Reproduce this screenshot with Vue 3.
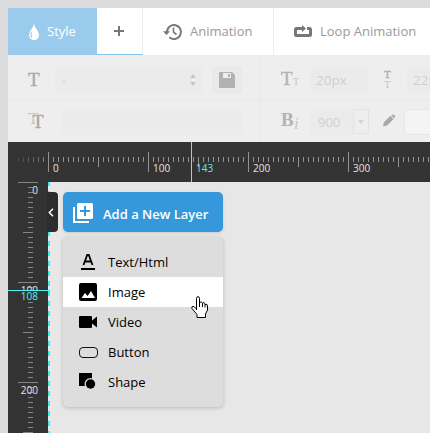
<script setup>
const hTicks = Array.from({ length: 84 }, (_, i) => i - 7)
const vTicks = Array.from({ length: 51 }, (_, i) => i)
const hLen = (i) => (i % 20 === 0 ? [152, 172] : i % 10 === 0 && i > 0 ? [157, 167] : [157, 162])
const vLen = (i) => (i % 20 === 0 ? [18, 38] : i % 10 === 0 ? [23, 33] : [28, 33])
const hLabels = [0, 100, 200, 300]
const vLabels = [0, 100, 200]
</script>

<template>
  <div class="page">
    <nav class="tabs">
      <div class="tab style">
        <svg class="drop" width="12" height="18" viewBox="0 0 12 18"><path d="M6 .5C5.5 5 1 8 1 12.2a5 5 0 0 0 10 0C11 8 6.500 5 6 .5z" fill="#fff"/><path d="M4 8.500C2.500 11 2.300 13 4 14.500" fill="none" stroke="#9acbed" stroke-width="1.100"/></svg>
        <span>Style</span>
      </div>
      <div class="tab plus"><svg width="10" height="10"><path d="M5 0V10M0 5H10" stroke="#777" stroke-width="2"/></svg></div>
      <div class="tab anim">
        <svg width="20" height="18" viewBox="0 0 20 18"><path d="M4 9a7 7 0 1 1 2.300 5.200" fill="none" stroke="#777" stroke-width="2"/><path d="M0 8.200H7L3.500 12z" fill="#777"/><path d="M10.500 4.500V9.200L13.500 11.500" fill="none" stroke="#777" stroke-width="1.600"/></svg>
        <span>Animation</span>
      </div>
      <div class="tab loop">
        <svg width="18" height="13" viewBox="0 0 18 13"><path d="M6 3.500H2.500Q1.500 3.500 1.500 4.500V9.500Q1.500 10.500 2.500 10.500H15.500Q16.500 10.500 16.500 9.500V4.500Q16.500 3.500 15.500 3.500H13" fill="none" stroke="#777" stroke-width="3"/><path d="M5 2H8V0L12 3.500L8 7V5H5z" fill="#777"/></svg>
        <span>Loop Animation</span>
      </div>
    </nav>

    <section class="tools">
      <div class="row">
        <div class="left">
          <b class="glyph t1">T</b>
          <div class="field select"><span>-</span><svg width="6" height="14"><path d="M3 1L5.800 5H.2zM3 13L5.800 9H.2z" fill="#c5c5c5"/></svg></div>
          <div class="save"><svg width="16" height="16"><path d="M0 1Q0 0 1 0H13L16 3V15Q16 16 15 16H1Q0 16 0 15z" fill="#b1b1b1"/><path d="M4 1H12V6H4z" fill="#eee"/><path d="M9 2H11V5H9z" fill="#b1b1b1"/></svg></div>
        </div>
        <div class="right">
          <svg class="ico" width="20" height="20"><text x="0" y="15" font-size="19" fill="#b3b3b3" stroke="#b3b3b3" stroke-width=".4">T</text><text x="12" y="15" font-size="10" fill="#c6c6c6">T</text></svg>
          <div class="field num">20px</div>
          <svg class="ico2" width="10" height="22"><text x="1" y="9" font-size="11" fill="#aaa" stroke="#aaa" stroke-width=".3">T</text><text x="1" y="19" font-size="11" fill="#c6c6c6">T</text></svg>
          <div class="field num second">22px</div>
        </div>
      </div>
      <div class="row lower">
        <div class="left">
          <svg class="shadowt" width="18" height="20"><text x="0" y="12" font-size="17" fill="#c4c4c4">T</text><text x="4.500" y="15.500" font-size="18" fill="#aaa" stroke="#eee" stroke-width="2" paint-order="stroke">T</text><text x="4.500" y="15.500" font-size="18" fill="#aaa" stroke="#aaa" stroke-width=".3">T</text></svg>
          <div class="field wide"></div>
        </div>
        <div class="right">
          <svg class="ico" width="20" height="20"><text x="0" y="14" font-size="19" font-weight="bold" fill="#b3b3b3">B</text><text x="13" y="17" font-size="17" font-style="italic" fill="#c6c6c6">i</text></svg>
          <div class="field num weight">900</div>
          <div class="drop-btn"><svg width="6" height="4"><path d="M0 0H6L3 4z" fill="#d5d5d5"/></svg></div>
          <svg class="pencil" width="13" height="13" viewBox="0 0 14 14"><path d="M1 9L8 2L11.500 5.500L4.500 12.500L0 13.500z" fill="#a8a8a8"/><path d="M9 1.500L10.500 .5Q11 .2 11.500.5L13 2.500Q13.500 3 13 3.500L12 4.500z" fill="#a8a8a8"/></svg>
          <div class="input"></div>
        </div>
      </div>
    </section>

    <div class="workspace">
      <svg class="ruler" width="422" height="291" viewBox="8 142 422 291">
        <defs><linearGradient id="fade" gradientUnits="userSpaceOnUse" x1="10" x2="48" y1="0" y2="0"><stop stop-color="#333"/><stop offset="1" stop-color="#888"/></linearGradient></defs>
        <path d="M8 142H430V182H48V433H8z" fill="#333"/>
        <rect v-for="i in hTicks" :key="'h' + i" :x="48 + i * 5" :y="hLen(i)[0]" width="1" :height="hLen(i)[1] - hLen(i)[0]" :fill="i < 0 ? 'url(#fade)' : '#929292'"/>
        <rect v-for="i in vTicks" :key="'v' + i" :x="vLen(i)[0]" :y="182 + i * 5" :width="vLen(i)[1] - vLen(i)[0]" height="1" fill="#858585"/>
        <text v-for="n in hLabels" :key="'a' + n" :x="53 + n" y="172" class="mark">{{ n }}</text>
        <text v-for="n in vLabels" :key="'b' + n" x="38" :y="194 + n" text-anchor="end" class="mark">{{ n }}</text>
        <path d="M8 291H48V301H8z" fill="#333"/>
        <path d="M28 302.500H33" stroke="#858585"/>
        <path d="M191.500 142V182M8 290.500H50" stroke="#4ef2f5"/>
        <text x="196" y="172" class="mark cyan">143</text>
        <text x="38" y="300" text-anchor="end" class="mark cyan">108</text>
        <path d="M49 182V433" stroke="#28f6fa" stroke-width="2" stroke-dasharray="5 5" stroke-dashoffset="1"/>
      </svg>

      <div class="collapse"><svg width="6" height="9"><path d="M5 .7L1.300 4.500L5 8.300" fill="none" stroke="#fff" stroke-width="1.500"/></svg></div>
      <div class="panel">
        <button class="add">
          <svg width="20" height="20"><path d="M1 4V19H16" fill="none" stroke="#fff" stroke-width="2"/><rect x="4" y="0" width="16" height="16" rx="1.500" fill="#fff"/><path d="M12 3V13M7 8H17" stroke="#3498db" stroke-width="2"/></svg>
          <span>Add a New Layer</span>
        </button>
        <ul class="menu">
          <li><svg width="18" height="18"><path d="M2 15H16V17H2z"/><path d="M4.500 12L8.200 2H9.800L13.500 12M6 8.500H12" fill="none" stroke="#000" stroke-width="1.800"/></svg>Text/Html</li>
          <li class="active"><svg width="18" height="18"><rect width="18" height="18" rx="2"/><path d="M2.500 15L6 10L8.500 13L12 8L16 15z" fill="#fff"/></svg>Image</li>
          <li><svg width="18" height="18"><path d="M1 3H12Q13 3 13 4V7.500L18 3.500V14.500L13 10.500V14Q13 15 12 15H1Q0 15 0 14V4Q0 3 1 3z"/></svg>Video</li>
          <li><svg width="19" height="18"><rect x=".5" y="4.500" width="18" height="10" rx="3.500" fill="none" stroke="#111"/></svg>Button</li>
          <li><svg width="18" height="18"><path d="M0 0H13V13H0z"/><circle cx="11.500" cy="11" r="6" fill="#ddd"/><circle cx="11.500" cy="11" r="4.700"/></svg>Shape</li>
        </ul>
      </div>
      <svg class="cursor" width="17" height="22" viewBox="0 0 17 22"><path d="M5.500 14V2.500Q5.500 .7 7 .7T8.500 2.500V7Q9 5.500 10.300 6T11.500 7.500Q12 6.200 13 6.700T14 8.500Q16.500 7.500 16.500 10V14L14.500 18V21.500H6V18.500L1 12.500Q.2 10.500 2 10.300Q3.500 10.500 5.500 13" fill="#fff" stroke="#000"/><path d="M8.500 6.500V11M11.500 7.500V11M14 8.500V11.500" stroke="#000"/></svg>
    </div>
  </div>
</template>

<style>
body { margin: 0; overflow: hidden; }
</style>
<style scoped>
.page { width: 430px; height: 433px; box-sizing: border-box; padding: 8px 0 0 8px; background: #dbdbdb; overflow: hidden; font: 13px "Open Sans", "Noto Sans", sans-serif; }
svg { display: block; flex: none; }
.tabs { display: flex; height: 47px; background: #fff; }
.tab { box-sizing: border-box; height: 47px; display: flex; align-items: center; color: #999; white-space: nowrap; flex: none; }
.tab span { padding-bottom: 1px; }
.style { width: 89px; padding-left: 20px; gap: 7px; background: #9acbed; color: #fff; }
.plus { width: 46px; justify-content: center; padding: 0 1px 1px 0; border-bottom: 1px solid #86c5ef; border-right: 1px solid #eee; }
.anim { width: 131px; padding-left: 20px; gap: 7px; border-right: 1px solid #eee; }
.loop { width: 156px; padding-left: 20px; gap: 8px; }
.tools { height: 87px; background: #eee; }
.row { display: flex; height: 46px; box-sizing: border-box; border-bottom: 1px solid #e8e8e8; }
.lower { height: 41px; border: 0; }
.left, .right { display: flex; align-items: center; box-sizing: border-box; }
.left { width: 253px; border-right: 1px solid #e9e9e9; padding-left: 20px; }
.right { width: 169px; overflow: hidden; padding-left: 20px; }
.right > * { flex: none; }
.row:not(.lower) .left, .row:not(.lower) .right { padding-top: 4px; }
.t1 { width: 27px; font: 19px "Liberation Serif", serif; color: #aaa; -webkit-text-stroke: .4px #aaa; }
.field { box-sizing: border-box; height: 26px; background: #ebebeb; border-radius: 3px; color: #d0d0d0; display: flex; align-items: center; }
.select { width: 148px; padding: 0 7px; justify-content: space-between; }
.save { margin-left: 9px; width: 30px; height: 28px; border-radius: 3px; background: #e9e9e9; display: flex; align-items: center; justify-content: center; }
.ico, .ico2, .shadowt { font-family: "Liberation Serif", serif; overflow: visible; }
.num { width: 58px; padding-left: 6px; margin-left: 9px; font-size: 13.500px; }
.ico2 { margin-left: 15px; }
.second { margin-left: 14px; }
.wide { width: 182px; margin-left: 15px; }
.weight { width: 43px; margin-left: 9px; padding-left: 8px; font-size: 13px; }
.drop-btn { width: 16px; height: 25px; border: 1px solid #e3e3e3; display: flex; align-items: center; justify-content: center; box-sizing: border-box; }
.pencil { margin-left: 14px; margin-bottom: 2px; }
.input { margin-left: 8px; width: 50px; height: 24px; border: 1px solid #e5e5e5; background: #f4f4f4; border-radius: 3px; }
.workspace { position: relative; height: 291px; background: #e7e7e7; }
.ruler { position: absolute; left: 0; top: 0; }
.mark { font: 10px "Open Sans", sans-serif; fill: #e5e5e5; }
.mark.cyan { fill: #4ef2f5; }
.collapse { position: absolute; left: 39px; top: 50px; width: 11px; height: 40px; padding-right: 3px; box-sizing: border-box; display: flex; align-items: center; justify-content: center; background: #2d2d2d; border-radius: 0 4px 4px 0; }
.panel { position: absolute; left: 55px; top: 50px; width: 160px; }
.add { width: 160px; height: 40px; border: 0; padding: 2px 0 0 10px; display: flex; align-items: center; gap: 10px; border-radius: 5px; background: #3498db; color: #fff; font: 600 13px "Open Sans", sans-serif; white-space: nowrap; box-shadow: 0 1px 3px #0002; }
.add span { padding-top: 2px; }
.menu { list-style: none; margin: 5px 0 0; padding: 10px 0; height: 150px; background: #ddd; border-radius: 5px; box-shadow: 0 1px 4px #0003; font-size: 13px; color: #000; }
.menu li { height: 30px; display: flex; align-items: center; padding-left: 16px; gap: 11px; }
.menu li:nth-child(4) { gap: 10px; }
.active { background: #fff; }
.cursor { position: absolute; left: 183px; top: 154px; }
</style>
